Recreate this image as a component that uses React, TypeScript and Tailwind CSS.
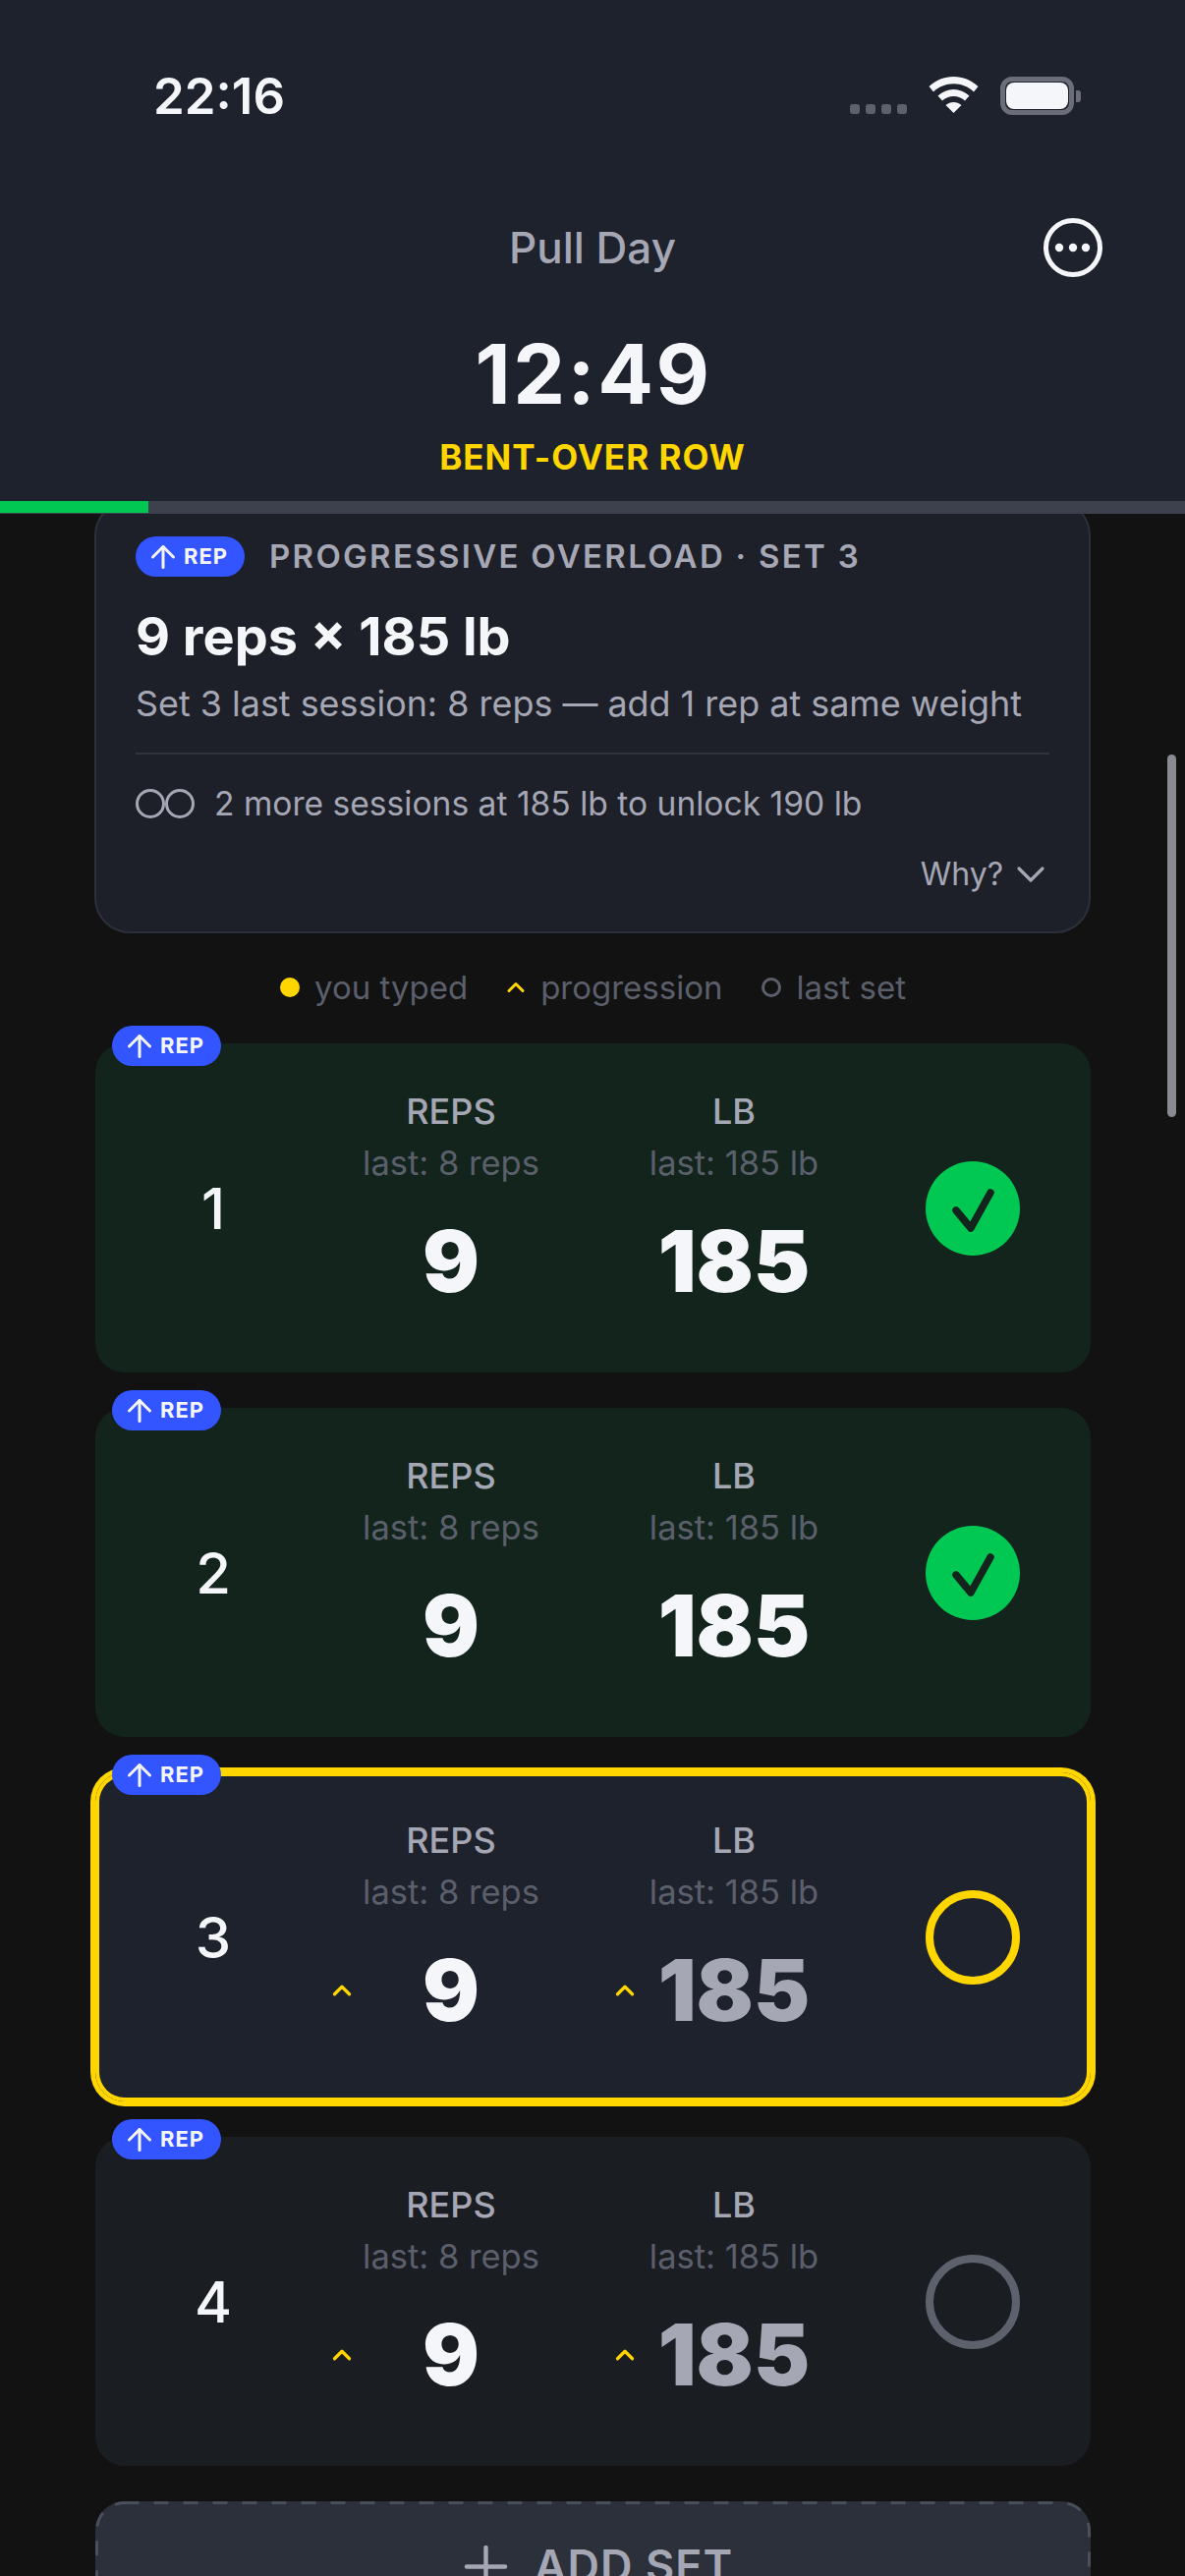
import { ArrowUp, ChevronDown, ChevronUp, Plus } from 'lucide-react'

const sets = [
  { n: 1, state: 'done' },
  { n: 2, state: 'done' },
  { n: 3, state: 'active' },
  { n: 4, state: 'todo' },
]

function RepBadge() {
  return (
    <span className="inline-flex h-[41px] w-[111px] items-center gap-[3px] rounded-full bg-[#3355ff] pl-[10px] text-[22px] font-bold tracking-[1px] text-[#f5f6fa]">
      <ArrowUp size={36} strokeWidth={2} className="shrink-0" />
      REP
    </span>
  )
}

function Column({ label, last, value, dim, showCaret }: { label: string; last: string; value: string; dim?: boolean; showCaret: boolean }) {
  return (
    <div className="relative flex w-[288px] flex-col items-center pb-[15px]">
      <span className="text-[36px] leading-[44px] font-medium text-[#a6a7b5]">{label}</span>
      <span className="mt-[9px] text-[34.500px] leading-[44px] text-[#5b5f6b]">{last}</span>
      <span className={`mt-[27px] text-[86px] leading-[102px] font-black ${dim ? 'text-[#a6a7b5]' : 'text-[#f5f6fa]'}`}>{value}</span>
      {showCaret && (
        <ChevronUp size={30} strokeWidth={2.6} className="absolute top-[160px] left-[18px] text-[#ffd600]" />
      )}
    </div>
  )
}

function SetRow({ n, state }: { n: number; state: string }) {
  const bg = state === 'done' ? 'bg-[#12241c]' : state === 'active' ? 'bg-[#1e222c]' : 'bg-[#1a1d22]'
  const ring = state === 'active' ? 'shadow-[0_0_0_5px_#ffd600,inset_0_0_0_4px_#ffd600]' : ''
  const open = state !== 'done'
  return (
    <div className={`relative flex h-[335px] items-center rounded-[30px] ${bg} ${ring}`}>
      <div className="absolute top-[-18px] left-[17px] flex">
        <RepBadge />
      </div>
      <span className="w-[240px] text-center text-[58px] leading-none font-medium text-[#f5f6fa]">{n}</span>
      <div className="-ml-[22px] flex">
        <Column label="REPS" last="last: 8 reps" value="9" showCaret={open} />
        <Column label="LB" last="last: 185 lb" value="185" dim={open} showCaret={open} />
      </div>
      <div className="ml-[51px] flex">
        {state === 'done' && (
          <span className="flex h-[96px] w-[96px] items-center justify-center rounded-full bg-[#00c853]">
            <svg width="96" height="96" viewBox="0 0 96 96" fill="none">
              <path d="M31 50 L46 68 L66 32" stroke="#12241c" strokeWidth="7.5" strokeLinecap="round" strokeLinejoin="round" />
            </svg>
          </span>
        )}
        {state === 'active' && <span className="h-[96px] w-[96px] rounded-full border-[8px] border-[#ffd600]" />}
        {state === 'todo' && <span className="h-[96px] w-[96px] rounded-full border-[8px] border-[#5d616c]" />}
      </div>
    </div>
  )
}

export default function App() {
  return (
    <div className="relative flex h-[2622px] w-[1206px] flex-col overflow-hidden bg-[#121212] font-['Inter',sans-serif]">
      <header className="relative z-10 shrink-0 bg-[#1e222c]">
        {/* status bar */}
        <div className="flex h-[200px] items-start justify-between pt-[66px] pr-[106px] pl-[156px]">
          <span className="text-[51px] leading-[64px] font-semibold text-[#f5f6fa]">22:16</span>
          <div className="flex items-start pt-[12px]">
            <div className="mt-[28px] flex gap-[6px]">
              {[0, 1, 2, 3].map(i => (
                <span key={i} className="h-[10px] w-[10px] rounded-[3px] bg-[#5d616c]" />
              ))}
            </div>
            <svg className="ml-[22px]" width="51" height="37" viewBox="0 0 51 37" fill="#f5f6fa">
              <path d="M25.5 0C16 0 7.5 3.6 0.5 10L5 15.5C10.5 10.3 17.5 7.3 25.5 7.3S40.500 10.300 46 15.500L50.500 10C43.500 3.600 35 0 25.500 0Z" />
              <path d="M25.500 13C19.500 13 14.300 15.200 9.500 19.500L14 24.500C17.300 21.500 21 20 25.500 20S33.700 21.500 37 24.500L41.500 19.500C36.700 15.200 31.500 13 25.500 13Z" />
              <path d="M25.500 26C22.500 26 20 27 17.500 29L25.500 37L33.500 29C31 27 28.500 26 25.500 26Z" />
            </svg>
            <div className="ml-[22px] flex items-center">
              <span className="flex h-[39px] w-[75px] rounded-[12px] border-[5px] border-[#6b6e78] p-[1px]">
                <span className="flex-1 rounded-[8px] bg-[#f5f6fa]" />
              </span>
              <span className="ml-[2px] h-[12px] w-[5px] rounded-r-[3px] bg-[#6b6e78]" />
            </div>
          </div>
        </div>

        <div className="grid h-[104px] grid-cols-[1fr_auto_1fr] items-center pr-[84px]">
          <span />
          <span className="translate-x-[42px] text-[44px] leading-none font-medium text-[#a6a7b5]">Pull Day</span>
          <svg className="justify-self-end" width="60" height="60" viewBox="0 0 60 60" fill="none">
            <circle cx="30" cy="30" r="27.500" stroke="#f5f6fa" strokeWidth="5" />
            <circle cx="16" cy="30" r="4.200" fill="#f5f6fa" />
            <circle cx="30" cy="30" r="4.200" fill="#f5f6fa" />
            <circle cx="43" cy="30" r="4.200" fill="#f5f6fa" />
          </svg>
        </div>

        <div className="mt-[27px] pl-[2px] text-center text-[84px] leading-[100px] font-bold tracking-[2.500px] text-[#f5f6fa]">12:49</div>
        <div className="mt-[12px] text-center text-[35px] leading-[44px] font-bold tracking-[1px] text-[#ffd600]">BENT-OVER ROW</div>
        <div className="mt-[23px] h-[13px] bg-[#3c414d]">
          <div className="h-[12px] w-[151px] bg-[#00c853]" />
        </div>
      </header>

      <main className="flex flex-col pr-[96px] pl-[97px]">
        {/* overload card, scrolled partly under the header */}
        <section className="-mt-[14px] -ml-[1px] h-[441px] rounded-[36px] border-[2px] border-[#2c303a] bg-[#1d2028] px-[40px] pt-[35px]">
          <div className="flex items-center gap-[25px]">
            <RepBadge />
            <span className="text-[33px] leading-[41px] font-semibold tracking-[2.300px] text-[#a6a7b5]">PROGRESSIVE OVERLOAD · SET 3</span>
          </div>
          <h2 className="mt-[29px] text-[54px] leading-[64px] font-bold text-[#f5f6fa]">9 reps × 185 lb</h2>
          <p className="mt-[12px] text-[35.900px] leading-[48px] text-[#a6a7b5]">Set 3 last session: 8 reps — add 1 rep at same weight</p>
          <div className="mt-[26px] h-[2px] bg-[#2f333d]" />
          <div className="mt-[28px] flex items-center text-[33.600px] leading-[44px] text-[#a6a7b5]">
            <span className="h-[30px] w-[30px] rounded-full border-[3px] border-[#a6a7b5]" />
            <span className="h-[30px] w-[30px] rounded-full border-[3px] border-[#a6a7b5]" />
            <span className="ml-[20px]">2 more sessions at 185 lb to unlock 190 lb</span>
          </div>
          <div className="mt-[26px] -mr-[5px] flex items-center justify-end gap-[4px] text-[32px] leading-[44px] text-[#a6a7b5]">
            Why?
            <ChevronDown size={48} strokeWidth={1.6} />
          </div>
        </section>

        <div className="mt-[33px] flex h-[44px] items-center justify-center text-[33px] leading-[44px] text-[#5b5f6b]">
          <span className="h-[20px] w-[20px] rounded-full bg-[#ffd600]" />
          <span className="ml-[15px]">you typed</span>
          <ChevronUp size={28} strokeWidth={2.6} className="ml-[35px] text-[#ffd600]" />
          <span className="ml-[11px]">progression</span>
          <span className="ml-[40px] h-[20px] w-[20px] rounded-full border-[3px] border-[#5b5f6b]" />
          <span className="ml-[15px]">last set</span>
        </div>

        <div className="mt-[35px] flex flex-col gap-[36px]">
          {sets.map(s => (
            <SetRow key={s.n} n={s.n} state={s.state} />
          ))}
        </div>

        <button className="relative mt-[36px] flex h-[132px] shrink-0 items-center justify-center gap-[16px] rounded-[30px] bg-[#2c303a] text-[45px] font-semibold tracking-[1px] text-[#a6a7b5]">
          <svg className="pointer-events-none absolute inset-0" width="1013" height="132" viewBox="0 0 1013 132" fill="none">
            <rect x="1.500" y="1.500" width="1010" height="129" rx="28" stroke="#4a4f5c" strokeWidth="3" strokeDasharray="15 15" />
          </svg>
          <Plus size={67} strokeWidth={1.6} />
          ADD SET
        </button>
      </main>

      <div className="absolute top-[768px] right-[9px] h-[369px] w-[9px] rounded-full bg-[#8a8b92]" />
    </div>
  )
}
